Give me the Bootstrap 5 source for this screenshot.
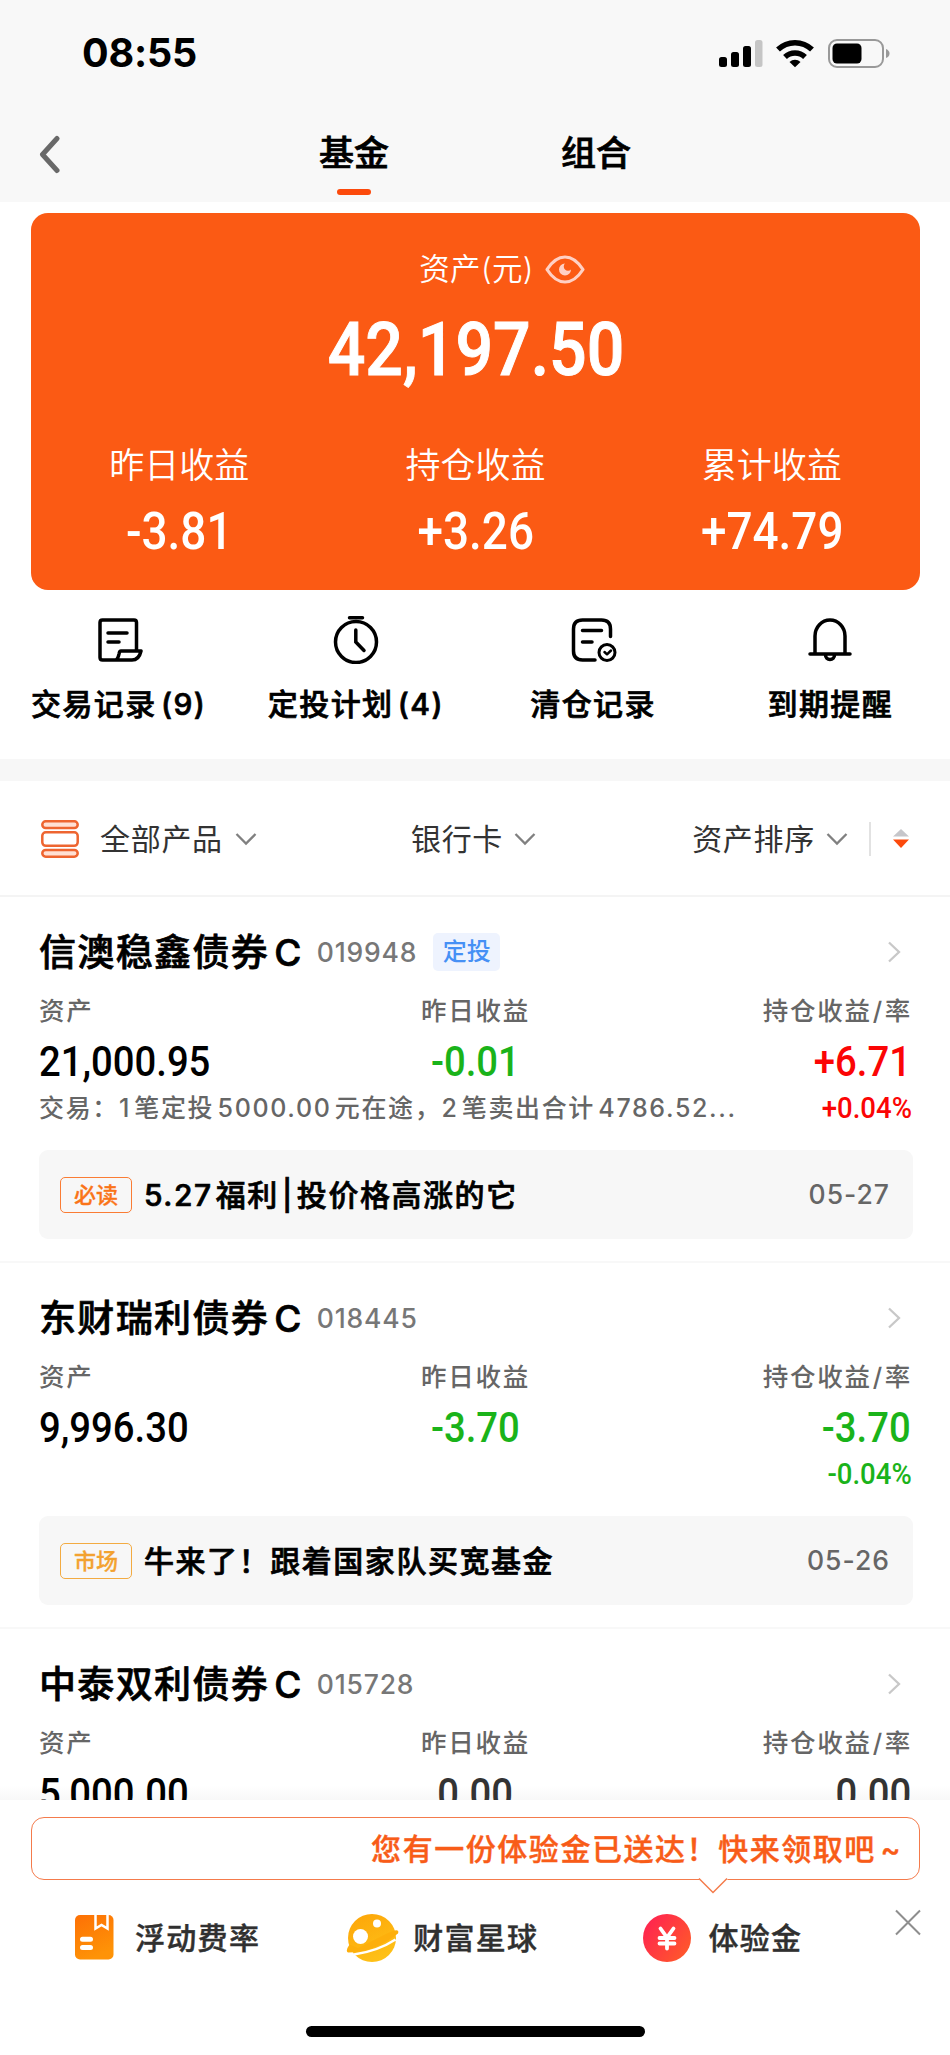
<!DOCTYPE html>
<html lang="zh-CN">
<head>
<meta charset="utf-8">
<meta name="viewport" content="width=device-width, initial-scale=1">
<title>基金</title>
<link href="https://cdn.jsdelivr.net/npm/bootstrap@5.3.0/dist/css/bootstrap.min.css" rel="stylesheet">
<style>
body{font-family:Inter,"Noto Sans CJK SC",sans-serif;color:#000;background:#fff;line-height:1;font-weight:500}
.screen{width:950px;height:2055px;overflow:hidden}
svg{display:block;flex:none}
.statusbar{height:108px;padding:0 60px 0 82px;background:#f8f8f8}
.clock{font-size:39.5px;font-weight:700;letter-spacing:-.2px}
.topnav{height:94px;background:#f8f8f8;position:relative;padding-left:37px}
.topnav .tab{font-size:35px;line-height:90px;height:94px;text-align:center;width:70px;position:relative}
.topnav .tab.on{margin-left:258px}
.topnav .tab.off{margin-left:172px}
.topnav .tab.on::after{content:"";position:absolute;left:18px;bottom:7px;width:34px;height:6px;border-radius:3px;background:#fc4a0c}
.topnav .tab,.actions .txt,.fund .name,.note .ttl{-webkit-text-stroke:.7px currentColor}
.asset{margin:11px 30px 0 31px;height:377px;border-radius:17px;background:#fb5a14;color:#fff}
.asset .cap{font-size:30.5px;letter-spacing:.4px;font-weight:350;height:30px;margin-top:41px;padding-left:54px}
.din{font-family:Roboto,sans-serif;font-weight:500;display:inline-block;transform:scaleX(.9);white-space:nowrap}
.asset .total{font-size:75px;height:76px;line-height:76px;margin-top:26px}
.asset .total .din{transform:scaleX(.883);-webkit-text-stroke:1px #fff}
.asset .figures{margin-top:61px}
.asset .lbl{font-size:35px;font-weight:350;height:36px;line-height:36px}
.asset .val{font-size:51px;height:52px;line-height:52px;margin-top:22px}
.actions{height:169px;padding-right:1px}
.actions .icn{height:48px;margin-top:26px}
.actions .txt{font-size:30px;letter-spacing:1.4px;word-spacing:-5px;line-height:36px;margin-top:22px;white-space:nowrap}
.band{height:22px;background:#f7f7f7}
.filters{height:116px;border-bottom:2px solid #f4f4f4;padding:1px 40px 0 41px;font-size:30px;font-weight:400;letter-spacing:.7px;color:#333}
.fund{height:366px;border-bottom:2px solid #f8f8f8;padding:0 37px 0 39px}
.fund .head{height:40px;margin-top:35px}
.fund .name{font-size:37px;letter-spacing:1.35px;word-spacing:-6px;white-space:nowrap}
.fund .code{font-size:26.5px;color:#777;margin-left:14px;letter-spacing:.8px}
.fund .dca{font-size:24px;color:#4690f5;background:#eef3fe;border-radius:5px;width:67px;height:38px;margin-left:16px}
.fund .sub{font-size:25.5px;letter-spacing:1.7px;color:#666;height:28px;line-height:28px;margin-top:25px;padding-right:1px}
.fund .sub>*,.fund .nums>*{flex:1 1 0}
.fund .sub i{font-style:normal;margin:0 1px}
.fund .nums{font-size:42.5px;height:44px;line-height:44px;margin-top:14px;padding-right:2px}
.fund .deal{height:30px;line-height:30px;font-size:25px;letter-spacing:1.65px;word-spacing:-5px;color:#666;margin-top:10px;padding-right:1px}
.fund .pct{font-size:29px;letter-spacing:0;transform:scaleX(.95)}
.ol{transform-origin:left}.or{transform-origin:right}
.up{color:#fb0505}.down{color:#1ab31a}
.note{height:89px;margin-top:27px;border-radius:9px;background:#f7f7f7;padding:0 23px 0 21px}
.note .tag{width:72px;height:36px;border:1.5px solid #fa7c34;border-radius:5px;color:#fa7418;font-size:22px;-webkit-text-stroke:.3px currentColor}
.note .tag.mk{border-color:#f3ab41;color:#f3a230}
.note .ttl{font-size:30px;letter-spacing:1.55px;word-spacing:-6.5px;margin-left:12px;white-space:nowrap}
.note .date{font-size:26.5px;color:#666;letter-spacing:1px}
.cut{height:171px;overflow:hidden;background:linear-gradient(#fff 0 156px,#f8f8f8 171px)}
.tip{margin:17px 30px 0 31px;height:63px;border:1.5px solid #f47b4c;border-radius:13px;color:#f85c18;font-size:30px;letter-spacing:1.55px;word-spacing:-5px;padding-right:17px;position:relative;-webkit-text-stroke:.4px currentColor}
.tip svg{position:absolute;left:666px;top:59px}
.bottombar{height:146px;position:relative;font-size:30px;letter-spacing:1.3px;color:#303030;padding:33px 29px 0 74px;-webkit-text-stroke:.4px currentColor}
.bottombar .lab{line-height:50px;white-space:nowrap}
.home{width:339px;height:11px;border-radius:6px;background:#000}
</style>
</head>
<body>
<div class="screen d-flex flex-column">
  <header>
    <div class="statusbar d-flex align-items-center justify-content-between">
      <span class="clock">08:55</span>
      <svg width="171" height="30" viewBox="0 0 171 30">
        <g fill="#000"><rect x="0" y="18" width="8" height="10" rx="2.5"/><rect x="12" y="13" width="8" height="15" rx="2.5"/><rect x="24" y="7" width="8" height="21" rx="2.5"/><rect x="36" y="1" width="7.5" height="27" rx="2.5" fill="#c5c5c5"/></g>
        <g fill="none" stroke="#000" stroke-width="5.500"><path d="M59 10.500a24.500 24.500 0 0 1 34 0"/><path d="M66 18a14.500 14.500 0 0 1 20 0"/></g>
        <path d="M70.500 23a8 8 0 0 1 11 0L76 28.300z"/>
        <rect x="110" y="1" width="54" height="27" rx="8" fill="none" stroke="#999" stroke-width="2"/><rect x="113.500" y="4.500" width="29" height="20" rx="4.500"/><path d="M167 10q3.500 1.500 3.500 4.500T167 19z" fill="#999"/>
      </svg>
    </div>
    <nav class="topnav d-flex">
      <svg class="align-self-center" width="24" height="40" viewBox="0 0 24 40"><path d="M20 3.500L5.500 19.500 20 35.500" fill="none" stroke="#696969" stroke-width="5" stroke-linecap="round" stroke-linejoin="round"/></svg>
      <div class="tab on">基金</div>
      <div class="tab off">组合</div>
    </nav>
  </header>

  <section class="asset d-flex flex-column">
    <div class="cap d-flex justify-content-center align-items-center">资产(元)
      <svg style="margin-left:10px" width="42" height="32" viewBox="0 0 42 32"><path d="M3 16.500Q11 4 21 4T39 16.500Q31 29 21 29T3 16.500z" fill="none" stroke="#ffd0c4" stroke-width="3.200" stroke-linejoin="round"/><path d="M21 10.500a6 6 0 1 0 6 6a4 4 0 0 1-6-6z" fill="#ffd0c4"/></svg>
    </div>
    <div class="total text-center"><span class="din">42,197.50</span></div>
    <div class="figures row g-0 text-center">
      <div class="col"><div class="lbl">昨日收益</div><div class="val"><span class="din">-3.81</span></div></div>
      <div class="col"><div class="lbl">持仓收益</div><div class="val"><span class="din">+3.26</span></div></div>
      <div class="col"><div class="lbl">累计收益</div><div class="val"><span class="din">+74.79</span></div></div>
    </div>
  </section>

  <section class="actions row g-0 text-center">
    <div class="col"><div class="icn d-flex justify-content-center"><svg width="48" height="48" viewBox="0 0 48 48" fill="none" stroke="#000" stroke-width="3.500" stroke-linecap="round" stroke-linejoin="round"><path d="M41.500 35V6.500q0-2.500-2.500-2.500H7.500Q5 4 5 6.500v35Q5 44 7.500 44H37q7 0 9-9H26q-1.500 0-2 3-1 5-3.500 6M13 17h19M13 26h11"/></svg></div><div class="txt">交易记录 (9)</div></div>
    <div class="col"><div class="icn d-flex justify-content-center"><svg width="48" height="48" viewBox="0 0 48 48" fill="none" stroke="#000" stroke-width="3.500" stroke-linecap="round"><circle cx="24" cy="26" r="20.500"/><path d="M17.500 1.800h13M23.800 14v12L32 34.500"/></svg></div><div class="txt">定投计划 (4)</div></div>
    <div class="col"><div class="icn d-flex justify-content-center"><svg width="48" height="48" viewBox="0 0 48 48" fill="none" stroke="#000" stroke-width="3.500" stroke-linecap="round" stroke-linejoin="round"><path d="M41.500 20.500V13q0-9-9-9h-19q-9 0-9 9v22q0 9 9 9H26M13.500 14.500h19M13.500 26H23"/><circle cx="38" cy="36.500" r="8" stroke-width="3"/><path d="M35.500 36l2.500 2.300 4-3.800" stroke-width="2.500"/></svg></div><div class="txt">清仓记录</div></div>
    <div class="col"><div class="icn d-flex justify-content-center"><svg width="48" height="48" viewBox="0 0 48 48" fill="none" stroke="#000" stroke-width="3.500" stroke-linecap="round"><path d="M4 38h40M9 37.500V20a15 16 0 0 1 30 0v17.500M19.500 39a4.500 4.500 0 0 0 9 0"/></svg></div><div class="txt">到期提醒</div></div>
  </section>
  <div class="band"></div>

  <section class="filters d-flex align-items-center justify-content-between">
    <div class="d-flex align-items-center">
      <svg width="38" height="38" viewBox="0 0 38 38" fill="#ffe0d4" stroke="#ee6530" stroke-width="2.500"><rect x="1.300" y="1.300" width="35.400" height="6.800" rx="3.400"/><rect x="1.300" y="12.300" width="35.400" height="13.500" rx="3.500" fill="#fff"/><rect x="1.300" y="29.900" width="35.400" height="6.800" rx="3.400"/></svg>
      <span style="margin-left:21px">全部产品</span>
      <svg style="margin-left:12px" width="22" height="14" viewBox="0 0 22 14"><path d="M1.500 2L11 11.500 20.500 2" fill="none" stroke="#808080" stroke-width="2.300"/></svg>
    </div>
    <div class="d-flex align-items-center" style="margin-left:-2px">
      <span>银行卡</span>
      <svg style="margin-left:11px" width="22" height="14" viewBox="0 0 22 14"><path d="M1.500 2L11 11.500 20.500 2" fill="none" stroke="#808080" stroke-width="2.300"/></svg>
    </div>
    <div class="d-flex align-items-center">
      <span>资产排序</span>
      <svg style="margin-left:11px" width="22" height="14" viewBox="0 0 22 14"><path d="M1.500 2L11 11.500 20.500 2" fill="none" stroke="#808080" stroke-width="2.300"/></svg>
      <svg style="margin-left:21px" width="41" height="34" viewBox="0 0 41 34"><path d="M1 0v34" stroke="#e2e2e2" stroke-width="2"/><path d="M24 14.500L32 7l8 7.500z" fill="#c6c6ca"/><path d="M24 17.500h16L32 26z" fill="#fc4a0c"/></svg>
    </div>
  </section>

  <article class="fund">
    <div class="head d-flex align-items-center"><span class="name">信澳稳鑫债券 C</span><span class="code">019948</span><span class="dca d-flex align-items-center justify-content-center">定投</span>
      <svg class="ms-auto me-2" width="22" height="24" viewBox="0 0 22 24"><path d="M6 2.500l10 9.500L6 21.500" fill="none" stroke="#c8c8c8" stroke-width="2.300"/></svg></div>
    <div class="sub d-flex"><span>资产</span><span class="text-center">昨日收益</span><span class="text-end">持仓收益<i>/</i>率</span></div>
    <div class="nums d-flex"><div><span class="din ol">21,000.95</span></div><div class="text-center down"><span class="din">-0.01</span></div><div class="text-end up"><span class="din or">+6.71</span></div></div>
    <div class="deal d-flex justify-content-between"><span>交易：1 笔定投 5000.00 元在途，2 笔卖出合计 4786.52...</span><span class="din or pct up">+0.04%</span></div>
    <div class="note d-flex align-items-center"><span class="tag d-flex align-items-center justify-content-center">必读</span><span class="ttl">5.27 福利 | 投价格高涨的它</span><span class="date ms-auto">05-27</span></div>
  </article>

  <article class="fund">
    <div class="head d-flex align-items-center"><span class="name">东财瑞利债券 C</span><span class="code">018445</span>
      <svg class="ms-auto me-2" width="22" height="24" viewBox="0 0 22 24"><path d="M6 2.500l10 9.500L6 21.500" fill="none" stroke="#c8c8c8" stroke-width="2.300"/></svg></div>
    <div class="sub d-flex"><span>资产</span><span class="text-center">昨日收益</span><span class="text-end">持仓收益<i>/</i>率</span></div>
    <div class="nums d-flex"><div><span class="din ol">9,996.30</span></div><div class="text-center down"><span class="din">-3.70</span></div><div class="text-end down"><span class="din or">-3.70</span></div></div>
    <div class="deal d-flex justify-content-end"><span class="din or pct down">-0.04%</span></div>
    <div class="note d-flex align-items-center"><span class="tag mk d-flex align-items-center justify-content-center">市场</span><span class="ttl">牛来了！跟着国家队买宽基金</span><span class="date ms-auto">05-26</span></div>
  </article>

  <div class="cut">
    <article class="fund">
      <div class="head d-flex align-items-center"><span class="name">中泰双利债券 C</span><span class="code">015728</span>
        <svg class="ms-auto me-2" width="22" height="24" viewBox="0 0 22 24"><path d="M6 2.500l10 9.500L6 21.500" fill="none" stroke="#c8c8c8" stroke-width="2.300"/></svg></div>
      <div class="sub d-flex"><span>资产</span><span class="text-center">昨日收益</span><span class="text-end">持仓收益<i>/</i>率</span></div>
      <div class="nums d-flex"><div><span class="din ol">5,000.00</span></div><div class="text-center" style="color:#333"><span class="din">0.00</span></div><div class="text-end" style="color:#333"><span class="din or">0.00</span></div></div>
    </article>
  </div>

  <div class="tip d-flex align-items-center justify-content-end">您有一份体验金已送达！快来领取吧 ~
    <svg width="30" height="17" viewBox="0 0 30 17"><path d="M0 0h30v2L15 15.500 1 2z" fill="#fff"/><path d="M1 1.500L15 15.500 29 1.500" fill="none" stroke="#f47b4c" stroke-width="1.500"/></svg>
  </div>
  <footer class="bottombar d-flex">
    <svg width="40" height="48" viewBox="0 0 40 48"><defs><linearGradient id="g1" x1="0" y1="0" x2=".4" y2="1"><stop stop-color="#fd7005"/><stop offset="1" stop-color="#fe9307"/></linearGradient></defs><rect x="1" y="2" width="38.500" height="44.500" rx="5" fill="url(#g1)"/><path d="M21.500 2v13.500l6-3.500 6 3.500V2" fill="none" stroke="#fff" stroke-width="2.500"/><path d="M8.500 26.300h8M8.500 34.500h8" stroke="#fff" stroke-width="5" stroke-linecap="round"/></svg>
    <span class="lab" style="margin-left:21px">浮动费率</span>
    <svg style="margin-left:86px" width="54" height="50" viewBox="0 0 54 50"><defs><linearGradient id="g2" x1="0" y1="0" x2=".5" y2="1"><stop stop-color="#fda408"/><stop offset="1" stop-color="#fec017"/></linearGradient></defs><circle cx="26" cy="25" r="24" fill="url(#g2)"/><path d="M8 41.500Q32 38 49.500 26.500" fill="none" stroke="#fff" stroke-width="2.500"/><path d="M0 40l9 2.500-4 6H0zM49 27.500l5-4v8z" fill="#fff"/><path d="M3.500 31.500Q-1 38 2 39.500 28 39.500 52 20.500 53.500 16 48.500 17.500L42 20 12 35z" fill="#fdaf0c"/><circle cx="14.500" cy="23.500" r="7.500" fill="#fff"/><circle cx="31" cy="10.500" r="4" fill="#fff"/></svg>
    <span class="lab" style="margin-left:13px">财富星球</span>
    <svg style="margin-left:104px" width="50" height="50" viewBox="0 0 50 50"><defs><linearGradient id="g3" x1="0" y1=".2" x2="1" y2=".9"><stop stop-color="#ff2350"/><stop offset="1" stop-color="#ff5c28"/></linearGradient></defs><circle cx="25" cy="25" r="24" fill="url(#g3)"/><path d="M18.500 15.500L25 24.500 31.500 15.500M25 24v11.500M17.500 25h15M17.500 30.500h15" fill="none" stroke="#fff" stroke-width="3.800" stroke-linecap="round"/></svg>
    <span class="lab" style="margin-left:16px">体验金</span>
    <svg class="ms-auto" style="margin-top:-4px" width="26" height="28" viewBox="0 0 26 28"><path d="M1 1.500l24 24M25 1.500l-24 24" stroke="#8e8e8e" stroke-width="2" fill="none"/></svg>
  </footer>
  <div class="home mx-auto"></div>
</div>
<script src="https://cdn.jsdelivr.net/npm/bootstrap@5.3.0/dist/js/bootstrap.bundle.min.js"></script>
</body>
</html>
